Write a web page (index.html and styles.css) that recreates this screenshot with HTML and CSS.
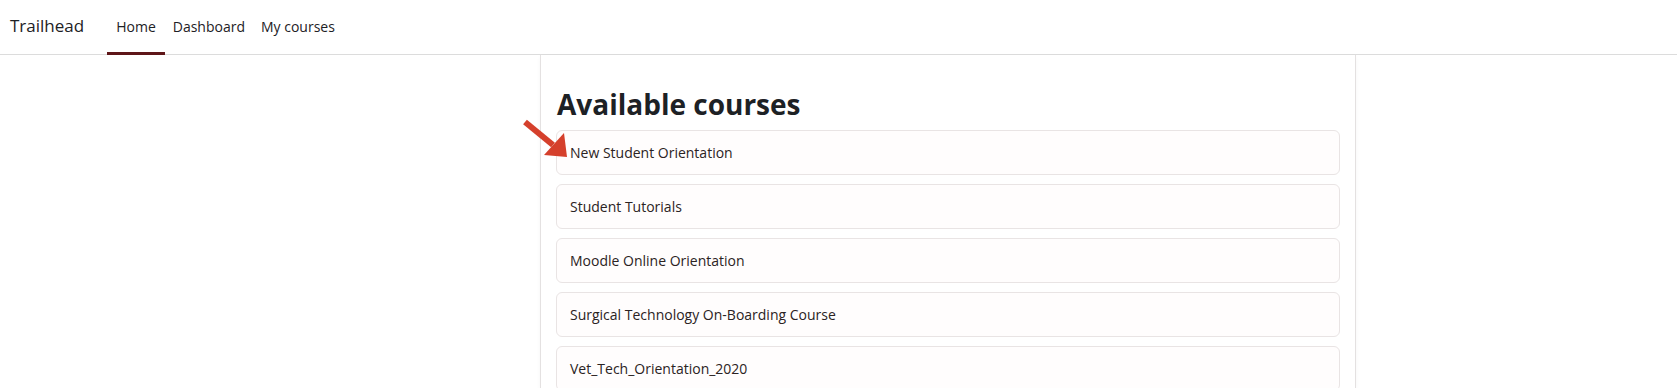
FILE: index.html
```html
<!DOCTYPE html>
<html lang="en">
<head>
<meta charset="utf-8">
<title>Trailhead</title>
<link rel="stylesheet" href="styles.css">
</head>
<body>
<header class="navbar">
  <a class="brand" href="#">Trailhead</a>
  <nav class="primary">
    <a class="nav-link active" href="#">Home</a>
    <a class="nav-link" href="#">Dashboard</a>
    <a class="nav-link" href="#">My courses</a>
  </nav>
</header>
<div class="page">
  <main class="card">
    <h2 class="title">Available courses</h2>
    <ul class="courses">
      <li class="course">
        <a href="#">New Student Orientation</a>
        <svg class="pointer" width="52" height="44" viewBox="0 0 52 44" aria-hidden="true">
          <line x1="6" y1="4" x2="34" y2="27" stroke="#d5402c" stroke-width="6" stroke-linecap="butt"/>
          <polygon points="25,37 45,15 48,39" fill="#d5402c"/>
        </svg>
      </li>
      <li class="course"><a href="#">Student Tutorials</a></li>
      <li class="course"><a href="#">Moodle Online Orientation</a></li>
      <li class="course"><a href="#">Surgical Technology On-Boarding Course</a></li>
      <li class="course"><a href="#">Vet_Tech_Orientation_2020</a></li>
    </ul>
  </main>
</div>
</body>
</html>
```
FILE: styles.css
```css
* { box-sizing: border-box; }
html, body { margin: 0; padding: 0; background: #fff; }
body {
  font-family: "Open Sans", "Noto Sans", "Liberation Sans", sans-serif;
  color: #1d2125;
  height: 388px;
  overflow: hidden;
}
a { text-decoration: none; color: inherit; }

.navbar {
  height: 55px;
  display: flex;
  align-items: stretch;
  border-bottom: 1px solid #dcdcdc;
  padding-left: 10px;
}
.brand {
  display: flex;
  align-items: center;
  font-size: 17px;
  color: #1d2125;
  padding-bottom: 3px;
  margin-right: 23px;
}
.primary { display: flex; align-items: stretch; }
.nav-link {
  display: flex;
  align-items: center;
  padding: 0 8px;
  font-size: 14px;
  color: #1d2125;
  border-bottom: 3px solid transparent;
  margin-bottom: -1px;
}
.nav-link.active {
  border-bottom-color: #5e1618;
  padding: 0 9px;
}

.page {
  padding-left: 540px;
}
.card {
  width: 816px;
  height: 333px;
  border-left: 1px solid #e4e1e1;
  border-right: 1px solid #e4e1e1;
  box-shadow: 0 2px 4px rgba(0,0,0,0.04);
  padding: 32px 15px 0;
}
.title {
  margin: 0 0 9px 1px;
  font-size: 28px;
  font-weight: 700;
  line-height: 34px;
  color: #1d2125;
}
.courses {
  list-style: none;
  margin: 0;
  padding: 0;
  display: flex;
  flex-direction: column;
  gap: 9px;
}
.course {
  position: relative;
  height: 45px;
  border: 1px solid #e9e4e4;
  border-radius: 6px;
  background: #fffdfd;
  display: flex;
  align-items: center;
  padding-left: 13px;
  font-size: 14px;
  color: #2b2323;
}
.pointer {
  position: absolute;
  left: -38px;
  top: -13px;
}
```
